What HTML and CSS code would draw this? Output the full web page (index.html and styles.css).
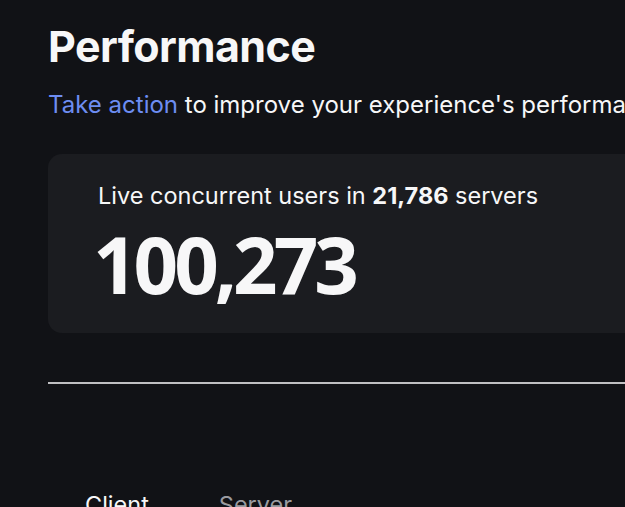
FILE: index.html
```html
<!DOCTYPE html>
<html>
<head>
  <title>Performance</title>
  <link rel="stylesheet" href="styles.css">
</head>
<body>
  <div class="page">
    <h1>Performance</h1>
    <p class="intro"><a href="#">Take action</a> to improve your experience's performance.</p>

    <div class="stat-card">
      <div class="stat-label">Live concurrent users in <b>21,786</b> servers</div>
      <div class="stat-value">100,273</div>
    </div>

    <hr class="divider">

    <div class="tabs">
      <span class="tab active">Client</span>
      <span class="tab">Server</span>
    </div>
  </div>
</body>
</html>
```

FILE: styles.css
```css
/* Page */
body {
  margin: 0;
  background-color: #111216;
  color: #f7f7f8;
  font-family: Inter, "Noto Sans", sans-serif;
  overflow: hidden;
}

.page {
  padding: 20px 0 0 48px;
  width: 900px;
}

h1 {
  margin: 0;
  font-size: 43px;
  font-weight: 700;
  letter-spacing: -0.6px;
  line-height: 52px;
}

.intro {
  margin: 18px 0 0;
  font-size: 24px;
  line-height: 30px;
  white-space: nowrap;
}

.intro a {
  color: #6d8df2;
  text-decoration: none;
}

/* Live stats card */
.stat-card {
  margin-top: 34px;
  background-color: #1b1c20;
  border-radius: 14px;
  padding: 27px 50px 29px;
}

.stat-label {
  font-size: 23.5px;
  line-height: 30px;
}

.stat-label b {
  font-weight: 700;
}

.stat-value {
  margin: 13px 0 0 -5px;
  font-family: "Open Sans", sans-serif;
  font-size: 78px;
  font-weight: 700;
  letter-spacing: -4px;
  line-height: 80px;
}

.divider {
  margin: 49px 0 0;
  border: none;
  height: 2px;
  background-color: #c0c0c2;
}

/* Tabs */
.tabs {
  display: flex;
  gap: 70px;
  padding: 106px 0 0 37px;
}

.tab {
  font-size: 23.5px;
  line-height: 30px;
  color: #9a9ba0;
}

.tab.active {
  color: #f7f7f8;
}
```
